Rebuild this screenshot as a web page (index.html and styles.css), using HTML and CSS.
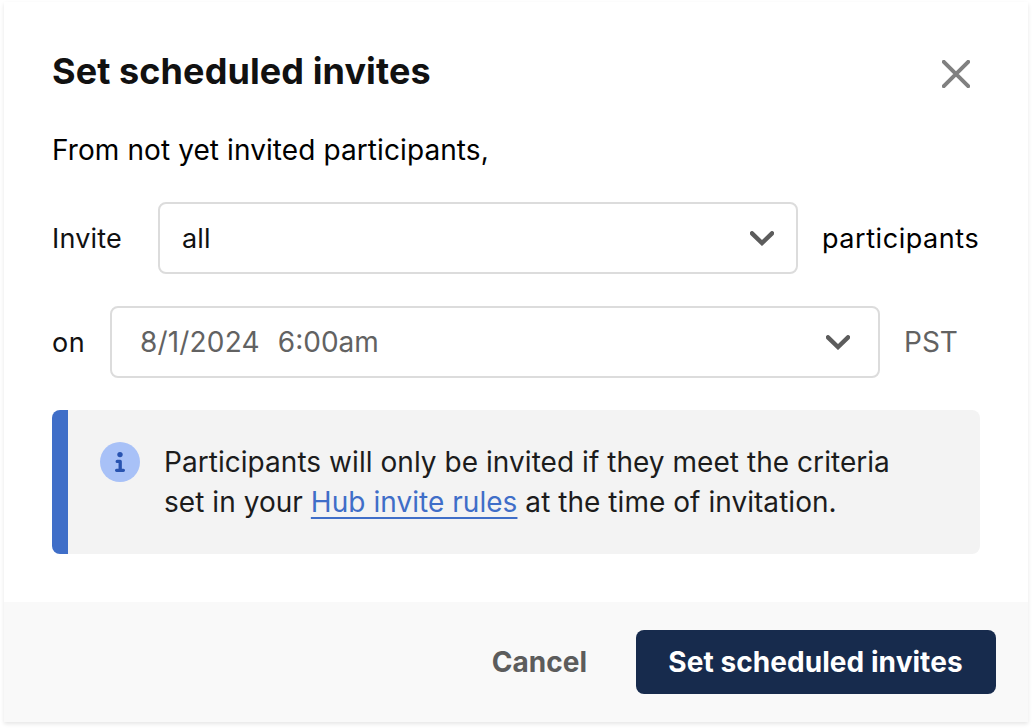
FILE: index.html
```html
<!DOCTYPE html>
<html lang="en">
<head>
<meta charset="utf-8">
<title>Set scheduled invites</title>
<link rel="stylesheet" href="styles.css">
</head>
<body>
<main class="dialog">
  <section class="content">
    <header class="header">
      <h1 class="title">Set scheduled invites</h1>
      <button class="close" aria-label="Close">
        <svg width="28" height="28" viewBox="0 0 28 28"><path d="M1.8 1.8 26.2 26.2M26.2 1.8 1.8 26.2"/></svg>
      </button>
    </header>
    <p class="intro">From not yet invited participants,</p>
    <div class="row">
      <span class="label invite">Invite</span>
      <button class="select">
        <span class="label">all</span>
        <svg class="chevron" width="24" height="15" viewBox="0 0 24 15"><path d="M2 2.3 12 12 22 2.3"/></svg>
      </button>
      <span class="label participants">participants</span>
    </div>
    <div class="row row-date">
      <span class="label on">on</span>
      <button class="select date">
        <span class="value"><span>8/1/2024</span><span class="time">6:00am</span></span>
        <svg class="chevron" width="24" height="15" viewBox="0 0 24 15"><path d="M2 2.3 12 12 22 2.3"/></svg>
      </button>
      <span class="zone">PST</span>
    </div>
    <aside class="notice">
      <svg class="info" width="40" height="40" viewBox="0 0 40 40">
        <circle class="info-disc" cx="20" cy="20" r="20"/>
        <circle class="info-dot" cx="20" cy="12.6" r="2.7"/>
        <path class="info-stem" d="M17.2 19.4H20.2V28.3M16.6 28.3H23.4"/>
      </svg>
      <p class="notice-text"><span class="line line-one">Participants will only be invited if they meet the criteria</span> <span class="line line-two">set in your <a class="link" href="#">Hub invite rules</a> at the time of invitation.</span></p>
    </aside>
  </section>
  <footer class="footer">
    <button class="cancel">Cancel</button>
    <button class="submit">Set scheduled invites</button>
  </footer>
</main>
</body>
</html>
```

FILE: styles.css
```css
* { box-sizing: border-box; }
body {
  margin: 0;
  padding: 2px 4px 6px;
  background: #fff;
  color: #000;
  font: 400 28px/40px Inter, "Liberation Sans", sans-serif;
}
button {
  margin: 0;
  padding: 0;
  border: 0;
  background: none;
  font: inherit;
  color: inherit;
}
h1, p { margin: 0; }
svg { display: block; flex: none; }
.dialog {
  display: flex;
  flex-direction: column;
  height: 720px;
  background: #fff;
  box-shadow: 0 2px 4px rgba(0, 0, 0, .1);
}
.content { flex: 1; padding: 44px 48px 0; }
.header { display: flex; justify-content: space-between; height: 56px; }
.title {
  font-size: 36px;
  line-height: 50px;
  font-weight: 700;
  letter-spacing: .09px;
  color: #111;
  white-space: nowrap;
}
.close { height: 28px; margin: 14px 10px 0 0; }
.close path { fill: none; stroke: #808080; stroke-width: 4; stroke-linecap: round; }
.intro { margin-top: 28px; letter-spacing: .09px; white-space: nowrap; }
.row { display: flex; align-items: center; height: 72px; margin-top: 32px; white-space: nowrap; }
.label { padding-top: 2px; font-size: 27px; letter-spacing: .2px; color: #111; }
.invite { width: 106px; }
.on { width: 58px; letter-spacing: .5px; }
.participants { margin-left: 24px; letter-spacing: .55px; color: #000; }
.select {
  display: flex;
  align-items: center;
  justify-content: space-between;
  width: 640px;
  height: 72px;
  padding: 0 22px;
  border: 2px solid #dcdcdc;
  border-radius: 8px;
}
.date { width: 770px; padding: 0 28px; }
.chevron path { fill: none; stroke: #5c5c5c; stroke-width: 4.4; stroke-linecap: round; stroke-linejoin: miter; }
.value { display: flex; gap: 18px; letter-spacing: .18px; color: #626262; }
.time { letter-spacing: 0; }
.zone { margin-left: 24px; color: #626262; }
.notice {
  display: flex;
  gap: 24px;
  height: 144px;
  margin-top: 32px;
  padding: 32px;
  border-left: 16px solid #3f6ec8;
  border-radius: 8px;
  background: #f3f3f3;
}
.info-disc { fill: #a8c1f7; }
.info-dot { fill: #2853b0; }
.info-stem { fill: none; stroke: #2853b0; stroke-width: 3.3; stroke-linecap: round; stroke-linejoin: round; }
.notice-text { color: #1c1c1c; }
.line { display: block; letter-spacing: .045px; white-space: nowrap; }
.link {
  color: #3f6ec8;
  text-decoration: underline;
  text-decoration-thickness: 2px;
  text-decoration-skip-ink: none;
  text-underline-offset: 5px;
}
.footer {
  display: flex;
  align-items: center;
  justify-content: flex-end;
  gap: 48px;
  height: 120px;
  padding-right: 32px;
  background: #f9f9f9;
}
.cancel { color: #5c5c5c; font-weight: 700; padding-right: 1px; }
.submit {
  width: 360px;
  height: 64px;
  padding-right: 1px;
  border-radius: 8px;
  background: #172b4d;
  color: #fff;
  font-weight: 700;
  letter-spacing: .06px;
  white-space: nowrap;
}
```
